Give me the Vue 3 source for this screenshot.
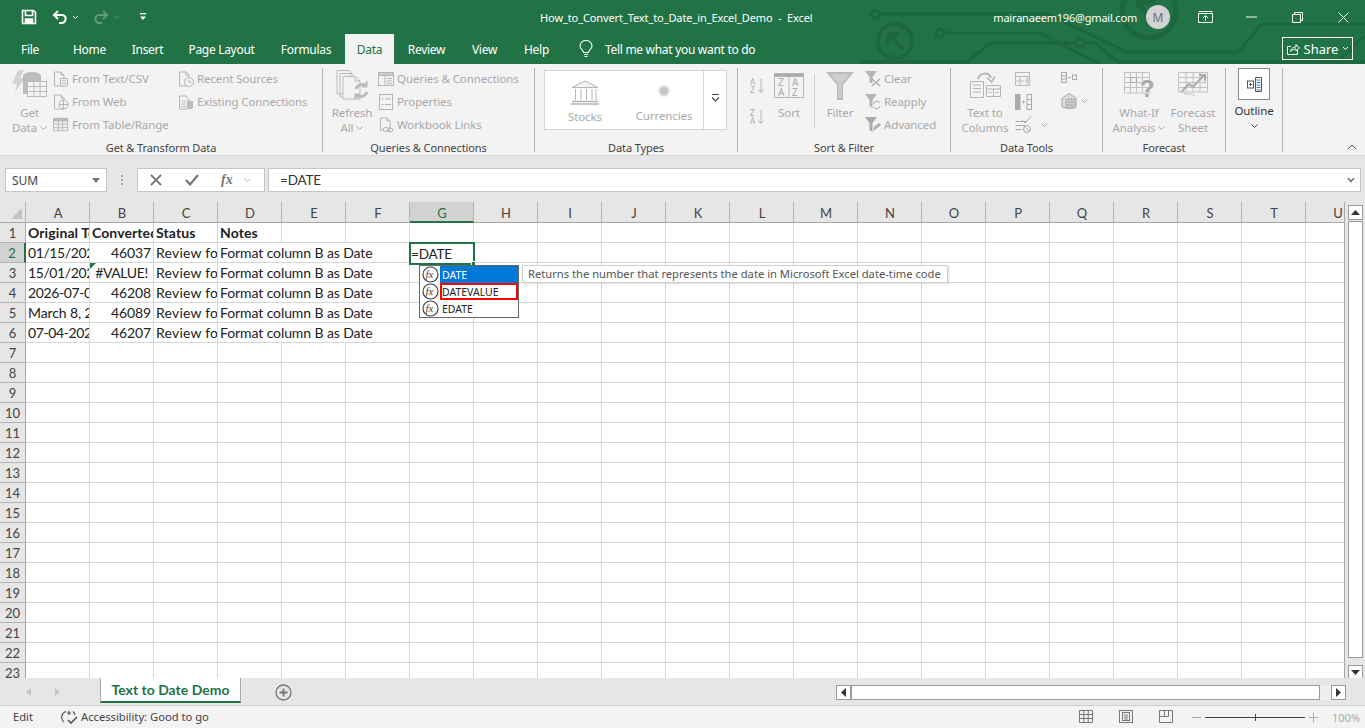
<template>
  <div class="app">
    <header class="titlebar">
      <svg class="circuit" width="1365" height="64" viewBox="0 0 1365 64" fill="none" stroke="#1d6640" stroke-width="3">
        <circle cx="875" cy="14" r="4" />
        <path d="M879 14H1047L1127 52H1238L1262 24H1365" />
        <circle cx="895" cy="41" r="17" stroke-width="4" />
        <path d="M888 34L903 49M888 34V45M888 34H899" stroke-width="4" />
        <circle cx="940" cy="33" r="4" />
        <path d="M944 33H1040L1100 64" />
        <circle cx="1080" cy="43" r="4" />
        <path d="M860 62H967L990 43H1076M1084 43H1095L1118 62H1365" />
        <circle cx="1149" cy="11" r="27" stroke-width="5" />
        <path d="M1136 2H1156M1136 2L1160 26" stroke-width="5" />
        <path d="M1335 64L1365 36" />
      </svg>
      <div class="title-row">
        <div class="qat">
          <svg width="16" height="16" viewBox="0 0 16 16" fill="none" stroke="#fff" stroke-width="1.6"><path d="M1.5 1.5H12.5L14.5 3.5V14.5H1.5Z" /><path d="M4.5 1.5V6.5H11.5V1.5" /><path d="M4.5 14.5V10H11.5V14.5" fill="#fff" /></svg>
          <svg class="undo" width="16" height="16" viewBox="0 0 16 16" fill="none" stroke="#fff" stroke-width="2"><path d="M6 2L2 6L6 10" /><path d="M2 6H10C15 6 15 14 9 14H7" /></svg>
          <svg class="caret-s" width="7" height="5" viewBox="0 0 7 5" fill="none" stroke="#fff"><path d="M1 1L3.5 3.5L6 1" /></svg>
          <svg class="redo" width="16" height="16" viewBox="0 0 16 16" fill="none" stroke="#5f9a7c" stroke-width="2"><path d="M10 2L14 6L10 10" /><path d="M14 6H6C1 6 1 14 7 14H9" /></svg>
          <svg class="caret-s" width="7" height="5" viewBox="0 0 7 5" fill="none" stroke="#5f9a7c"><path d="M1 1L3.5 3.5L6 1" /></svg>
          <svg class="custom" width="8" height="8" viewBox="0 0 8 8" fill="#fff"><rect x="1" y="0" width="6" height="1.4" /><path d="M1 3.5H7L4 7Z" /></svg>
        </div>
        <div class="doc-title">How_to_Convert_Text_to_Date_in_Excel_Demo&nbsp; - &nbsp;Excel</div>
        <div class="account">
          <span class="email">mairanaeem196@gmail.com</span>
          <span class="avatar">M</span>
          <div class="win-btn"><svg width="15" height="12" viewBox="0 0 15 12" fill="none" stroke="#fff"><path d="M.5 2.5H14.5V11.5H.5ZM.5 .5H14.5" /><path d="M7.5 10V5M5 7L7.5 4.5L10 7" /></svg></div>
          <div class="win-btn"><svg width="11" height="2" viewBox="0 0 11 2" stroke="#fff"><path d="M0 1H11" /></svg></div>
          <div class="win-btn"><svg width="11" height="11" viewBox="0 0 11 11" fill="none" stroke="#fff"><path d="M.5 2.5H8.5V10.5H.5Z" /><path d="M2.5 2.5V.5H10.5V8.5H8.5" /></svg></div>
          <div class="win-btn"><svg width="11" height="11" viewBox="0 0 11 11" fill="none" stroke="#fff"><path d="M.5 .5L10.5 10.5M10.5 .5L.5 10.5" /></svg></div>
        </div>
      </div>
      <nav class="tab-row">
        <div class="tabs">
          <span v-for="t in tabs" :key="t" class="tab" :class="{ active: t === 'Data' }">{{ t }}</span>
        </div>
        <div class="tell">
          <svg width="14" height="18" viewBox="0 0 14 18" fill="none" stroke="#fff" stroke-width="1.1"><path d="M4.5 12.5C4 9.5 1 9 1 6A6 5.5 0 0 1 13 6C13 9 10 9.5 9.5 12.5Z" /><path d="M5 14.5H9M5.5 16.5H8.5" /></svg>
          <span>Tell me what you want to do</span>
        </div>
        <div class="share">
          <svg width="14" height="14" viewBox="0 0 14 14" fill="none" stroke="#fff"><path d="M5 4.5H1.5V12.5H11.5V8" /><path d="M4.5 9.5C5 6 8 5 10 5V2.5L13.5 6L10 9V7C8 7 6 8 4.5 9.5Z" /></svg>
          <span>Share</span>
          <svg width="7" height="5" viewBox="0 0 7 5" fill="none" stroke="#fff"><path d="M1 1L3.5 3.5L6 1" /></svg>
        </div>
      </nav>
    </header>

    <section class="ribbon">
      <div class="group g-get">
        <div class="body">
          <div class="big big-get">
            <svg class="big-icon" width="36" height="34" viewBox="0 0 36 34" fill="none" stroke="#bbb"><path d="M6 0L0 14H5L3 22L13 8H8L12 0Z" fill="#d4d4d4" stroke="none" /><ellipse cx="20" cy="6" rx="9" ry="4" fill="#bbb" stroke="none" /><path d="M11 6V24H20V12H29V6Z" fill="#bbb" stroke="none" /><rect x="15.5" y="11.5" width="19" height="15" fill="#f3f3f3" /><path d="M15.5 16.5H34.5M15.5 21.5H34.5M22 11.5V26.5M28 11.5V26.5" /></svg>
            <span>Get</span>
            <span>Data <svg class="cv" width="7" height="4" viewBox="0 0 7 4"><path d="M.5 .5L3.5 3.5L6.5 .5" /></svg></span>
          </div>
          <div class="small-col c-from">
            <div class="small">
              <svg width="16" height="16" viewBox="0 0 16 16" fill="none" stroke="#b5b5b5"><path d="M1.5 1H8L11 4V15H1.5ZM8 1V4H11" /><path d="M7.5 7.5H14.5V15H7.5Z" fill="#f3f3f3" /><path d="M9 10H13M9 12.5H13" /></svg>
              <span>From Text/CSV</span>
            </div>
            <div class="small">
              <svg width="16" height="16" viewBox="0 0 16 16" fill="none" stroke="#b5b5b5"><path d="M1.5 1H8L11 4V15H1.5ZM8 1V4H11" /><circle cx="10.5" cy="10.5" r="4.5" fill="#f3f3f3" /><path d="M6 10.5H15M10.5 6V15" /></svg>
              <span>From Web</span>
            </div>
            <div class="small">
              <svg width="18" height="16" viewBox="0 0 18 16" fill="none" stroke="#b5b5b5"><rect x=".5" y=".5" width="16" height="14" /><rect x=".5" y=".5" width="16" height="3" fill="#bbb" /><path d="M.5 7H16.5M.5 11H16.5M6 3.5V14.5M11 3.5V14.5" /></svg>
              <span>From Table/Range</span>
            </div>
          </div>
          <div class="small-col">
            <div class="small">
              <svg width="16" height="16" viewBox="0 0 16 16" fill="none" stroke="#b5b5b5"><path d="M1.5 1H8L11 4V15H1.5ZM8 1V4H11" /><circle cx="11" cy="11" r="4.5" fill="#f3f3f3" /><path d="M11 8.5V11H13.5" /></svg>
              <span>Recent Sources</span>
            </div>
            <div class="small">
              <svg width="16" height="16" viewBox="0 0 16 16" fill="none" stroke="#b5b5b5"><path d="M1.5 2H8L10 4V15H1.5Z" /><path d="M3.5 7H8M3.5 10H8M3.5 12.5H8" /><ellipse cx="12" cy="8" rx="3" ry="1.5" fill="#bbb" stroke="none" /><path d="M9 8V14C10 15.5 14 15.5 15 14V8Z" fill="#bbb" stroke="none" /></svg>
              <span>Existing Connections</span>
            </div>
          </div>
        </div>
        <div class="label">Get &amp; Transform Data</div>
      </div>

      <div class="group g-query">
        <div class="body">
          <div class="big big-refresh">
            <svg class="big-icon" width="32" height="32" viewBox="0 0 32 32" fill="none" stroke="#bbb"><path d="M1 .5H13L15 3V24H1ZM4 3.5H16L18 6V27H4Z" fill="#f3f3f3" /><path d="M7 6.5H19L24 11V29H7Z" fill="#f3f3f3" /><path d="M19 6.5V11H24" /><path d="M20 19A7 7 0 0 1 31 16M31 22A7 7 0 0 1 20 25" stroke-width="3" /><path d="M31 11V17H26M19 30V24H24" fill="#bbb" stroke-width="1" /></svg>
            <span>Refresh</span>
            <span>All <svg class="cv" width="7" height="4" viewBox="0 0 7 4"><path d="M.5 .5L3.5 3.5L6.5 .5" /></svg></span>
          </div>
          <div class="small-col c-query">
            <div class="small">
              <svg width="16" height="14" viewBox="0 0 16 14" fill="none" stroke="#b5b5b5"><rect x=".5" y=".5" width="15" height="13" /><rect x=".5" y=".5" width="15" height="3" fill="#ccc" /><path d="M7 3.5V13.5M9 6.5H14M9 9H14M9 11.5H14" /></svg>
              <span>Queries &amp; Connections</span>
            </div>
            <div class="small">
              <svg width="14" height="16" viewBox="0 0 14 16" fill="none" stroke="#b5b5b5"><rect x=".5" y=".5" width="13" height="15" /><path d="M6 5H12M6 10.5H12M2.5 5H4.5M2.5 10.5H4.5" /></svg>
              <span>Properties</span>
            </div>
            <div class="small">
              <svg width="14" height="16" viewBox="0 0 14 16" fill="none" stroke="#b5b5b5"><path d="M1.5 1H8L11 4V13H1.5ZM8 1V4H11" /><ellipse cx="7" cy="12.5" rx="3" ry="2" fill="#f3f3f3" /><ellipse cx="11" cy="13" rx="3" ry="2" fill="none" /></svg>
              <span>Workbook Links</span>
            </div>
          </div>
        </div>
        <div class="label">Queries &amp; Connections</div>
      </div>

      <div class="group g-types">
        <div class="body">
          <div class="types">
            <div class="type type-stocks">
              <svg width="28" height="25" viewBox="0 0 28 25" fill="none" stroke="#b5b5b5"><path d="M1 7.5L14 1L27 7.5Z" fill="#f3f3f3" /><path d="M4.5 9V20M10 9V20M15.5 9V20M21 9V20M25 9V20" /><path d="M1 21.5H27M0 24H28" stroke-width="1.5" /></svg>
              <span>Stocks</span>
            </div>
            <div class="type type-curr">
              <i class="dot"></i>
              <span>Currencies</span>
            </div>
            <div class="type-more">
              <svg width="9" height="8" viewBox="0 0 9 8" fill="none" stroke="#444"><path d="M1 .5H8" /><path d="M1 3.5L4.5 7L8 3.5" stroke-width="1.2" /></svg>
            </div>
          </div>
        </div>
        <div class="label">Data Types</div>
      </div>

      <div class="group g-sort">
        <div class="body">
          <div class="az-col">
            <svg width="15" height="17" viewBox="0 0 15 17" fill="none" stroke="#b5b5b5"><text x="0" y="8" class="az">A</text><text x="0" y="16" class="az">Z</text><path d="M11 2V15M8.5 12.5L11 15.5L13.5 12.5" /></svg>
            <svg width="15" height="17" viewBox="0 0 15 17" fill="none" stroke="#b5b5b5"><text x="0" y="8" class="az">Z</text><text x="0" y="16" class="az">A</text><path d="M11 2V15M8.5 12.5L11 15.5L13.5 12.5" /></svg>
          </div>
          <div class="big big-sort">
            <svg class="big-icon" width="30" height="25" viewBox="0 0 30 25" fill="none" stroke="#b5b5b5"><rect x=".5" y=".5" width="29" height="24" /><rect x=".5" y=".5" width="29" height="3" fill="#aaa" /><path d="M15 3.5V24.5" /><text x="4" y="13" class="za">Z</text><text x="18" y="13" class="za">A</text><text x="4" y="23" class="za">A</text><text x="18" y="23" class="za">Z</text></svg>
            <span>Sort</span>
          </div>
          <i class="sort-sep"></i>
          <div class="big big-filter">
            <svg class="big-icon" width="28" height="28" viewBox="0 0 28 28" fill="#bbb"><path d="M0 0H28L17 13V28H11V13Z" /><path d="M4 2H24L15.5 12V26H12.5V12Z" fill="#cfcfcf" /></svg>
            <span>Filter</span>
          </div>
          <div class="small-col c-filter">
            <div class="small">
              <svg width="16" height="16" viewBox="0 0 16 16" fill="#b5b5b5"><path d="M0 0H12L7.5 6V13L4.5 11V6Z" /><path d="M7 8L15 15M15 8L7 15" stroke="#aaa" fill="none" stroke-width="1.2" /></svg>
              <span>Clear</span>
            </div>
            <div class="small">
              <svg width="16" height="16" viewBox="0 0 16 16" fill="#b5b5b5"><path d="M0 0H12L7.5 6V14L4.5 12V6Z" /><path d="M8.5 10A3.5 3.5 0 0 1 15 9M15 12A3.5 3.5 0 0 1 8.5 13" stroke="#aaa" fill="none" /></svg>
              <span>Reapply</span>
            </div>
            <div class="small">
              <svg width="16" height="16" viewBox="0 0 16 16" fill="#aaa"><path d="M0 0H12L7.5 6V15L4.5 13V6Z" /><path d="M8 14L9 10L14 6L16 8L11 12Z" /></svg>
              <span>Advanced</span>
            </div>
          </div>
        </div>
        <div class="label">Sort &amp; Filter</div>
      </div>

      <div class="group g-tools">
        <div class="body">
          <div class="big big-text">
            <svg class="big-icon" width="31" height="26" viewBox="0 0 31 26" fill="none" stroke="#b5b5b5"><path d="M.5 9.5H13.5V25.5H.5Z" /><path d="M3 13H11M3 16.5H11M3 20H11" /><path d="M16.5 13.5H30.5V24.5H16.5Z" /><path d="M16.5 17H30.5M23.5 17V24.5M18.5 20.5H21.5M25.5 20.5H28.5" /><path d="M8 7C10 0 19 0 21 6" stroke-width="2" /><path d="M17 5.5L21.5 10L25 4.5" stroke-width="1.5" /></svg>
            <span>Text to</span>
            <span>Columns</span>
          </div>
          <div class="tool-col">
            <svg width="17" height="16" viewBox="0 0 17 16" fill="none" stroke="#bbb"><rect x=".5" y=".5" width="14" height="13" /><path d="M.5 4.5H14.5M.5 9H9M5 4.5V13.5" /><path d="M13 4L9.5 10H12L10.5 15.5L16 8H13L15 4Z" fill="#ccc" stroke="none" /></svg>
            <svg width="17" height="16" viewBox="0 0 17 16" fill="none" stroke="#aaa"><rect x=".5" y=".5" width="4.5" height="15" fill="#aaa" /><rect x="12" y=".5" width="4.5" height="15" /><path d="M12 5.5H16.5M12 10.5H16.5M7 8H10M8.5 6.5V9.5" /></svg>
            <div class="tool-check">
              <svg width="17" height="17" viewBox="0 0 17 17" fill="none" stroke="#aaa"><path d="M.5 5.5H11M.5 9.5H10M.5 13.5H7" /><path d="M7 4L10 7L16 .5" /><circle cx="12" cy="13" r="3.5" /><path d="M9.5 10.5L14.5 15.5" /></svg>
              <svg class="cv" width="7" height="4" viewBox="0 0 7 4"><path d="M.5 .5L3.5 3.5L6.5 .5" /></svg>
            </div>
          </div>
          <div class="tool-col tool-last">
            <svg width="16" height="11" viewBox="0 0 16 11" fill="none" stroke="#aaa"><rect x=".5" y=".5" width="5" height="10" /><path d="M.5 3.8H5.5M.5 7H5.5M7 5.5H10" /><rect x="11.5" y="3" width="4" height="4.5" /></svg>
            <div class="tool-rel">
              <svg width="16" height="16" viewBox="0 0 16 16" fill="none" stroke="#aaa"><path d="M1 5L8 .5L15 5L15 14L8 15.5L1 14Z" fill="#ddd" /><path d="M5 6H14V15H5ZM8 6V15M11 6V15M5 9H14M5 12H14" /></svg>
              <svg class="cv" width="7" height="4" viewBox="0 0 7 4"><path d="M.5 .5L3.5 3.5L6.5 .5" /></svg>
            </div>
          </div>
        </div>
        <div class="label">Data Tools</div>
      </div>

      <div class="group g-fore">
        <div class="body">
          <div class="big big-whatif">
            <svg class="big-icon" width="30" height="26" viewBox="0 0 30 26" fill="none" stroke="#c2c2c2"><path d="M.5 .5H25.5V21H.5ZM.5 5.5H25.5M.5 10.5H25.5M.5 15.5H25.5M6.5 .5V21M12.5 .5V21M18.5 .5V21" /><rect x="6.5" y="5.5" width="6" height="5" stroke="#aaa" /><text x="16" y="25" class="q">?</text></svg>
            <span>What-If</span>
            <span>Analysis <svg class="cv" width="7" height="4" viewBox="0 0 7 4"><path d="M.5 .5L3.5 3.5L6.5 .5" /></svg></span>
          </div>
          <div class="big big-sheet">
            <svg class="big-icon" width="30" height="26" viewBox="0 0 30 26" fill="none" stroke="#c2c2c2"><path d="M.5 .5H29.5V20H.5ZM.5 5.5H29.5M.5 10.5H29.5M.5 15.5H29.5M8 .5V20M15 .5V20M22 .5V20" /><path d="M4 19L11 12L15 15L26 3" stroke="#aaa" stroke-width="2" /><path d="M21 3H27V9" stroke="#aaa" stroke-width="2" /><path d="M2 19L8 22H14L17 24" /></svg>
            <span>Forecast</span>
            <span>Sheet</span>
          </div>
        </div>
        <div class="label">Forecast</div>
      </div>

      <div class="group g-outline">
        <div class="body">
          <div class="outline">
            <div class="outline-box">
              <svg width="15" height="15" viewBox="0 0 15 15" fill="none" stroke="#555"><rect x=".5" y="4" width="6" height="7" /><path d="M2 7.5H5M3.5 6V9" /><path d="M8.5 .5H14.5V14.5H8.5Z" /><path d="M9.5 3H13.5M9.5 5.5H13.5M9.5 8H13.5M9.5 10.5H13.5M9.5 13H13.5" stroke="#3b7fc4" /></svg>
            </div>
            <span>Outline</span>
            <svg width="7" height="4" viewBox="0 0 7 4" fill="none" stroke="#444"><path d="M.5 .5L3.5 3.5L6.5 .5" /></svg>
          </div>
        </div>
      </div>

      <svg class="collapse" width="10" height="6" viewBox="0 0 10 6" fill="none" stroke="#555"><path d="M1 5L5 1L9 5" /></svg>
    </section>

    <section class="fbar">
      <div class="namebox">
        <span>SUM</span>
        <svg width="8" height="5" viewBox="0 0 8 5" fill="#777"><path d="M0 0H8L4 5Z" /></svg>
      </div>
      <div class="grip"><i></i><i></i><i></i></div>
      <div class="fbtns">
        <svg width="12" height="12" viewBox="0 0 12 12" fill="none" stroke="#777" stroke-width="1.8"><path d="M1 1L11 11M11 1L1 11" /></svg>
        <svg class="f-ok" width="14" height="12" viewBox="0 0 14 12" fill="none" stroke="#777" stroke-width="2.2"><path d="M1 6L5 10.5L13 1" /></svg>
        <span class="fx">fx</span>
        <svg class="f-cv" width="7" height="4" viewBox="0 0 7 4" fill="none" stroke="#bbb"><path d="M.5 .5L3.5 3.5L6.5 .5" /></svg>
      </div>
      <div class="finput">
        <span>=DATE</span>
        <svg width="8" height="6" viewBox="0 0 8 6" fill="none" stroke="#777" stroke-width="1.6"><path d="M1 1L4 4.5L7 1" /></svg>
      </div>
    </section>

    <section class="sheet">
      <div class="grid">
        <div class="corner"><i></i></div>
        <div v-for="c in cols" :key="c" class="col-h" :class="{ on: c === 'G' }">{{ c }}</div>
        <template v-for="r in rowNums" :key="r">
          <div class="row-h" :class="{ on: r === 2 }">{{ r }}</div>
          <div
            v-for="(c, i) in cols"
            :key="c"
            class="cell"
            :class="cellClass(r, i)"
          >{{ cellText(r, i) }}</div>
        </template>

        <div class="editor">=DATE<i></i></div>
        <ul class="suggest">
          <li v-for="s in suggestions" :key="s" :class="{ sel: s === 'DATE', mark: s === 'DATEVALUE' }">
            <svg width="17" height="17" viewBox="0 0 17 17" fill="none" stroke="#444" stroke-width="1.2"><circle cx="8.5" cy="8.5" r="7.5" /><text x="3.5" y="12" class="fx-t">fx</text></svg>
            <span>{{ s }}</span>
          </li>
        </ul>
        <div class="tip">Returns the number that represents the date in Microsoft Excel date-time code</div>
      </div>
      <div class="vscroll">
        <div class="sb-btn"><svg width="9" height="5" viewBox="0 0 9 5" fill="#333"><path d="M4.5 0L9 5H0Z" /></svg></div>
        <div class="sb-thumb"></div>
        <div class="sb-btn"><svg width="9" height="5" viewBox="0 0 9 5" fill="#333"><path d="M0 0H9L4.5 5Z" /></svg></div>
      </div>
    </section>

    <section class="sheetbar">
      <div class="nav-arrows">
        <svg width="5" height="8" viewBox="0 0 5 8" fill="#c4c4c4"><path d="M5 0V8L0 4Z" /></svg>
        <svg width="5" height="8" viewBox="0 0 5 8" fill="#c4c4c4"><path d="M0 0V8L5 4Z" /></svg>
      </div>
      <div class="sheet-tab">Text to Date Demo</div>
      <svg class="add" width="17" height="17" viewBox="0 0 17 17" fill="none" stroke="#777" stroke-width="1.3"><circle cx="8.5" cy="8.5" r="7.5" /><path d="M4.5 8.5H12.5M8.5 4.5V12.5" stroke-width="1.8" /></svg>
      <div class="hscroll">
        <div class="sb-btn h"><svg width="5" height="9" viewBox="0 0 5 9" fill="#333"><path d="M5 0V9L0 4.5Z" /></svg></div>
        <div class="h-thumb"></div>
        <div class="h-track"></div>
        <div class="sb-btn h"><svg width="5" height="9" viewBox="0 0 5 9" fill="#333"><path d="M0 0V9L5 4.5Z" /></svg></div>
      </div>
    </section>

    <footer class="status">
      <span class="mode">Edit</span>
      <svg class="a11y" width="17" height="16" viewBox="0 0 17 16" fill="none" stroke="#555" stroke-width="1.2"><path d="M5 2.5A6 6 0 0 0 3 13M8 2V6M6 4H10M12 2.5A6 6 0 0 1 14 6" /><path d="M7 11L10 14L16 8" stroke-width="1.6" /></svg>
      <span class="a11y-t">Accessibility: Good to go</span>
      <div class="views">
        <svg width="14" height="13" viewBox="0 0 14 13" fill="none" stroke="#777"><path d="M.5 .5H13.5V12.5H.5ZM.5 4.5H13.5M.5 8.5H13.5M4.8 .5V12.5M9.2 .5V12.5" /></svg>
        <svg width="14" height="13" viewBox="0 0 14 13" fill="none" stroke="#777"><rect x=".5" y=".5" width="13" height="12" /><rect x="3.5" y="2.5" width="7" height="8" /><path d="M5 5H9M5 7H9M5 9H9" /></svg>
        <svg width="14" height="13" viewBox="0 0 14 13" fill="none" stroke="#777"><path d="M.5 .5H13.5V12.5H.5ZM5.5 .5V6.5H9.5V.5M.5 6.5H5.5" /></svg>
      </div>
      <div class="zoom">
        <i class="z-minus"></i>
        <div class="z-track"><i></i></div>
        <svg width="9" height="9" viewBox="0 0 9 9" stroke="#aaa"><path d="M0 4.5H9M4.5 0V9" /></svg>
        <span>100%</span>
      </div>
    </footer>
  </div>
</template>

<script setup>
const tabs = ['File', 'Home', 'Insert', 'Page Layout', 'Formulas', 'Data', 'Review', 'View', 'Help']
const cols = 'ABCDEFGHIJKLMNOPQRSTU'.split('')
const rowNums = Array.from({ length: 23 }, (_, i) => i + 1)
const suggestions = ['DATE', 'DATEVALUE', 'EDATE']

const note = 'Format column B as Date'
const review = 'Review format'
const cells = {
  1: ['Original Text', 'Converted Date', 'Status', 'Notes'],
  2: ['01/15/2026', '46037', review, note],
  3: ['15/01/2026', '#VALUE!', review, note],
  4: ['2026-07-05', '46208', review, note],
  5: ['March 8, 2026', '46089', review, note],
  6: ['07-04-2026', '46207', review, note]
}

const cellText = (r, i) => (cells[r] && cells[r][i]) || ''

const cellClass = (r, i) => ({
  bold: r === 1,
  num: i === 1 && r > 1 && r !== 3,
  err: i === 1 && r === 3,
  tight: i === 0 && r > 1 && r < 7 && r !== 5,
  loose: i === 2 && r > 1 && r < 7,
  spill: r > 1 && r < 7 && (i === 3 || i === 4)
})
</script>

<style>
html, body { margin: 0; background: #fff; overflow: hidden; }
</style>

<style scoped>
.app {
  width: 1365px;
  height: 728px;
  display: flex;
  flex-direction: column;
  overflow: hidden;
  font-family: "Noto Sans", sans-serif;
  font-size: 12px;
  color: #444;
}
svg { display: block; flex: none; }

.titlebar { position: relative; height: 64px; flex: none; background: #217346; color: #fff; }
.circuit { position: absolute; left: 0; top: 0; }
.title-row { position: relative; height: 34px; display: flex; align-items: center; }
.qat { width: 540px; flex: none; display: flex; align-items: center; padding-left: 21px; box-sizing: border-box; }
.undo { margin-left: 15px; }
.qat .caret-s { margin-left: 4px; }
.redo { margin-left: 14px; }
.custom { margin-left: 19px; }
.doc-title { width: 400px; font-size: 11px; letter-spacing: -0.1px; white-space: nowrap; }
.account { flex: 1; display: flex; align-items: center; justify-content: flex-end; margin-right: -1px; }
.email { font-size: 11px; letter-spacing: -0.2px; margin-right: 9px; white-space: nowrap; }
.avatar {
  width: 24px; height: 24px; border-radius: 50%;
  background: #d2d2d2; color: #6a6a7a;
  display: flex; align-items: center; justify-content: center;
  font-size: 12px; margin-right: 12px;
}
.win-btn { width: 46px; display: flex; justify-content: center; }

.tab-row { position: relative; height: 30px; display: flex; align-items: stretch; }
.tabs { display: grid; grid-template-columns: 60px 59px 57px 91px 78px 49px 65px 51px 53px; }
.tab { display: flex; align-items: center; justify-content: center; font-size: 12px; letter-spacing: -0.3px; color: #fff; white-space: nowrap; }
.tab.active { background: #f3f3f3; color: #217346; }
.tell { display: flex; align-items: center; gap: 12px; margin-left: 16px; font-size: 12px; letter-spacing: -0.3px; white-space: nowrap; }
.share {
  position: absolute; left: 1282px; top: 3px;
  width: 71px; height: 23px; box-sizing: border-box;
  border: 1px solid #fff;
  display: flex; align-items: center; justify-content: center; gap: 4px;
  font-size: 13px;
}

.ribbon {
  height: 92px; flex: none; box-sizing: border-box;
  background: #f3f3f3; border-bottom: 1px solid #d4d4d4;
  padding-top: 4px; display: flex; position: relative;
}
.group { height: 84px; flex: none; box-sizing: border-box; border-right: 1px solid #b4b4b4; }
.body { height: 72px; display: flex; align-items: flex-start; color: #a9a9a9; font-size: 11.5px; letter-spacing: -0.1px; line-height: 15px; }
.label { height: 16px; line-height: 16px; text-align: center; font-size: 11px; letter-spacing: -0.1px; color: #444; white-space: nowrap; }
.g-get { width: 323px; }
.g-query { width: 212px; }
.g-types { width: 203px; }
.g-sort { width: 213px; }
.g-tools { width: 152px; }
.g-fore { width: 123px; }
.g-outline { width: 57px; }

.big { display: flex; flex-direction: column; align-items: center; flex: none; white-space: nowrap; }
.big span { display: flex; align-items: center; gap: 3px; height: 15px; }
.cv { fill: none; stroke: #a9a9a9; }
.big svg.big-icon { height: auto; margin-bottom: 3px; }

.small-col { display: flex; flex-direction: column; flex: none; margin-top: -1px; }
.small { height: 23px; display: flex; align-items: center; gap: 3px; white-space: nowrap; }
.small svg { width: 16px; }

.g-get .big-get { width: 37px; margin-left: 11px; }
.big-get .big-icon { margin-top: 2px; margin-bottom: 1px !important; }
.c-from { margin-left: 5px; width: 125px; }

.big-refresh { width: 40px; margin-left: 9px; }
.big-refresh .big-icon { margin-top: 2px; margin-bottom: 3px !important; }
.c-query { margin-left: 6px; }

.types {
  margin: 2px 0 0 9px; width: 183px; height: 60px; box-sizing: border-box;
  background: #fff; border: 1px solid #d4d4d4; display: flex;
}
.type { display: flex; flex-direction: column; align-items: center; white-space: nowrap; }
.type-stocks { width: 80px; padding-top: 9px; gap: 4px; }
.type-curr { width: 78px; padding-top: 15px; }
.dot { width: 10px; height: 10px; border-radius: 50%; background: #c4c4c4; filter: blur(1px); margin-bottom: 12px; }
.type-more { flex: 1; border-left: 1px solid #d4d4d4; display: flex; align-items: center; justify-content: center; padding-bottom: 4px; }

.az-col { margin: 9px 0 0 12px; display: flex; flex-direction: column; gap: 14px; }
.az { font-size: 8px; fill: #a9a9a9; stroke: none; font-family: "Noto Sans", sans-serif; }
.za { font-size: 10px; fill: #a9a9a9; stroke: none; font-family: "Noto Sans", sans-serif; }
.big-sort { width: 30px; margin: 5px 0 0 9px; }
.big-sort .big-icon { margin-bottom: 7px !important; }
.sort-sep { width: 1px; height: 55px; background: #d0d0d0; margin: 6px 0 0 10px; flex: none; }
.big-filter { width: 32px; margin: 4px 0 0 9px; }
.big-filter .big-icon { margin-bottom: 5px !important; }
.c-filter { margin-left: 9px; }

.big-text { width: 50px; margin: 4px 0 0 9px; }
.big-text .big-icon { margin-bottom: 7px !important; }
.tool-col { margin: 4px 0 0 5px; display: flex; flex-direction: column; gap: 6px; width: 38px; flex: none; }
.tool-check { display: flex; align-items: center; gap: 9px; }
.tool-last { margin-left: 8px; gap: 10px; }
.tool-rel { display: flex; align-items: center; gap: 4px; }

.big-whatif { width: 56px; margin: 4px 0 0 8px; }
.big-whatif .big-icon { margin-bottom: 7px !important; }
.big-sheet { width: 50px; margin: 4px 0 0 1px; }
.big-sheet .big-icon { margin-bottom: 7px !important; }
.q { font-size: 24px; font-weight: 700; fill: #aaa; stroke: none; font-family: "Liberation Sans", sans-serif; }

.outline { width: 56px; display: flex; flex-direction: column; align-items: center; color: #333; }
.outline-box {
  width: 32px; height: 32px; box-sizing: border-box; margin: 0 0 3px;
  background: #fff; border: 1px solid #8a8a8a;
  display: flex; align-items: center; justify-content: center;
}
.outline span { height: 15px; margin-bottom: 6px; }

.collapse { position: absolute; right: 8px; bottom: 5px; }

.fbar {
  height: 46px; flex: none; box-sizing: border-box; background: #e6e6e6;
  padding: 12px 4px 10px 5px; display: flex; align-items: stretch;
}
.namebox, .fbtns, .finput { box-sizing: border-box; background: #fff; border: 1px solid #c6c6c6; display: flex; align-items: center; }
.namebox { width: 102px; padding: 0 6px; justify-content: space-between; font-size: 12px; color: #444; }
.grip { width: 30px; display: flex; flex-direction: column; align-items: center; justify-content: center; gap: 2px; }
.grip i { width: 2px; height: 2px; background: #a8a8a8; }
.fbtns { width: 128px; padding-left: 12px; }
.f-ok { margin-left: 23px; }
.fx { font-family: "Liberation Serif", serif; font-style: italic; font-weight: 700; font-size: 14px; color: #777; margin-left: 22px; }
.f-cv { margin-left: 11px; }
.finput { width: 1093px; margin-left: 3px; padding: 0 5px 0 11px; justify-content: space-between; font-family: Lato, sans-serif; font-size: 13.5px; letter-spacing: -0.2px; color: #333; }

.sheet { height: 476px; flex: none; display: flex; background: #e6e6e6; }
.grid {
  position: relative; width: 1345px; height: 476px; flex: none; overflow: hidden;
  background: #fff; display: grid;
  grid-template-columns: 26px repeat(21, 64px);
  grid-template-rows: 21px repeat(23, 20px);
  font-family: Lato, sans-serif; font-size: 14px; letter-spacing: -0.1px; color: #222;
  border-right: 1px solid #a8a8a8; box-sizing: border-box;
}
.corner { background: #e6e6e6; border-right: 1px solid #b4b4b4; border-bottom: 1px solid #a8a8a8; position: relative; overflow: hidden; }
.corner i { position: absolute; right: 3px; bottom: 3px; border-style: solid; border-width: 0 0 11px 11px; border-color: transparent transparent #c4c4c4 transparent; }
.col-h {
  background: #e6e6e6; border-right: 1px solid #b4b4b4; border-bottom: 1px solid #a8a8a8;
  display: flex; align-items: center; justify-content: center; padding: 2px 0 0 1px; box-sizing: border-box;
  font-size: 13px; color: #444;
}
.col-h.on { background: #d2d2d2; color: #217346; border-bottom: 2px solid #217346; }
.row-h {
  background: #e6e6e6; border-right: 1px solid #a8a8a8; border-bottom: 1px solid #b4b4b4;
  display: flex; align-items: center; justify-content: center; box-sizing: border-box;
  font-size: 13px; color: #444;
}
.row-h.on { background: #d2d2d2; color: #217346; border-right: 2px solid #217346; }
.cell {
  border-right: 1px solid #d6d6d6; border-bottom: 1px solid #d6d6d6; box-sizing: border-box;
  padding: 0 2px; line-height: 20px; white-space: nowrap; overflow: hidden; position: relative;
}
.bold { font-weight: 700; letter-spacing: 0.1px; }
.num { text-align: right; }
.err { text-align: center; letter-spacing: -0.4px; }
.err::before {
  content: ""; position: absolute; left: 0; top: 0;
  border-style: solid; border-width: 6px 6px 0 0; border-color: #217346 transparent transparent transparent;
}
.tight { letter-spacing: -0.4px; }
.loose { letter-spacing: 0.2px; }
.spill { overflow: visible; border-right-color: transparent; }

.editor {
  position: absolute; left: 409px; top: 40px; width: 66px; height: 23px; box-sizing: border-box;
  background: #fff; border: 2px solid #217346; padding-left: 0; line-height: 20px; font-size: 13.5px; letter-spacing: -0.2px; color: #222;
}
.editor i { position: absolute; right: -3px; bottom: -3px; width: 5px; height: 5px; background: #217346; border: 1px solid #fff; box-sizing: border-box; }
.suggest {
  position: absolute; left: 419px; top: 63px; width: 100px; height: 53px; box-sizing: border-box;
  margin: 0; padding: 0; list-style: none;
  background: #fff; border: 1px solid #666;
  font-family: "Noto Sans", sans-serif; font-size: 10.5px; letter-spacing: 0; color: #222;
}
.suggest li { height: 17px; display: flex; align-items: center; }
.suggest svg { margin: 0 1px 0 2px; }
.suggest span { flex: 1; align-self: stretch; display: flex; align-items: center; padding-left: 2px; box-sizing: border-box; }
.suggest .sel span { background: #0078d7; color: #fff; }
.suggest .mark span { border: 2px solid #f00; padding-left: 0; }
.fx-t { font-family: "Liberation Serif", serif; font-style: italic; font-size: 11px; fill: #444; stroke: none; }
.tip {
  position: absolute; left: 522px; top: 63px; width: 426px; height: 18px; box-sizing: border-box;
  background: #fff; border: 1px solid #d0d0d0; box-shadow: 1px 1px 2px rgba(0, 0, 0, .15);
  padding-left: 5px; line-height: 15px; font-family: "Noto Sans", sans-serif; font-size: 11.2px; letter-spacing: 0; color: #555; white-space: nowrap;
}

.vscroll { width: 20px; flex: none; padding: 3px 2px 0 3px; box-sizing: border-box; display: flex; flex-direction: column; }
.sb-btn { width: 15px; height: 15px; box-sizing: border-box; border: 1px solid #9a9a9a; background: #fff; display: flex; align-items: center; justify-content: center; flex: none; }
.sb-thumb { height: 437px; margin: 1px 0 7px; box-sizing: border-box; background: #fff; border: 1px solid #9a9a9a; flex: none; }

.sheetbar { height: 28px; flex: none; box-sizing: border-box; background: #e6e6e6; border-bottom: 1px solid #cfcfcf; display: flex; align-items: flex-start; position: relative; }
.nav-arrows { width: 100px; flex: none; box-sizing: border-box; padding: 10px 40px 0 26px; display: flex; justify-content: space-between; }
.sheet-tab {
  width: 141px; height: 25px; box-sizing: border-box; flex: none;
  background: #fff; border: 1px solid #a8a8a8; border-top: none; border-bottom: 2px solid #217346;
  display: flex; align-items: center; justify-content: center;
  font-family: Lato, sans-serif; font-weight: 700; font-size: 14px; color: #217346;
}
.add { margin: 6px 0 0 34px; }
.hscroll { display: flex; position: absolute; left: 836px; top: 7px; height: 14px; }
.sb-btn.h { width: 15px; height: 15px; }
.h-thumb { width: 469px; height: 15px; box-sizing: border-box; background: #fff; border: 1px solid #9a9a9a; margin-left: 0; }
.h-track { width: 11px; background: #efefef; height: 15px; }

.status { height: 22px; flex: none; box-sizing: border-box; padding-bottom: 1px; background: #f3f3f3; display: flex; align-items: center; font-size: 11.2px; color: #444; position: relative; }
.mode { margin-left: 13px; }
.a11y { margin-left: 28px; }
.a11y-t { margin-left: 3px; }
.views { position: absolute; left: 1079px; top: 4px; display: flex; gap: 26px; }
.zoom { position: absolute; left: 1192px; top: 0; height: 22px; display: flex; align-items: center; color: #aaa; }
.z-minus { width: 9px; height: 1px; background: #aaa; margin-right: 4px; }
.z-track { width: 100px; height: 1px; background: #444; position: relative; margin-right: 4px; }
.z-track i { position: absolute; left: 50px; top: -3px; width: 1px; height: 7px; background: #444; }
.zoom span { margin-left: 14px; font-size: 11px; }
</style>
